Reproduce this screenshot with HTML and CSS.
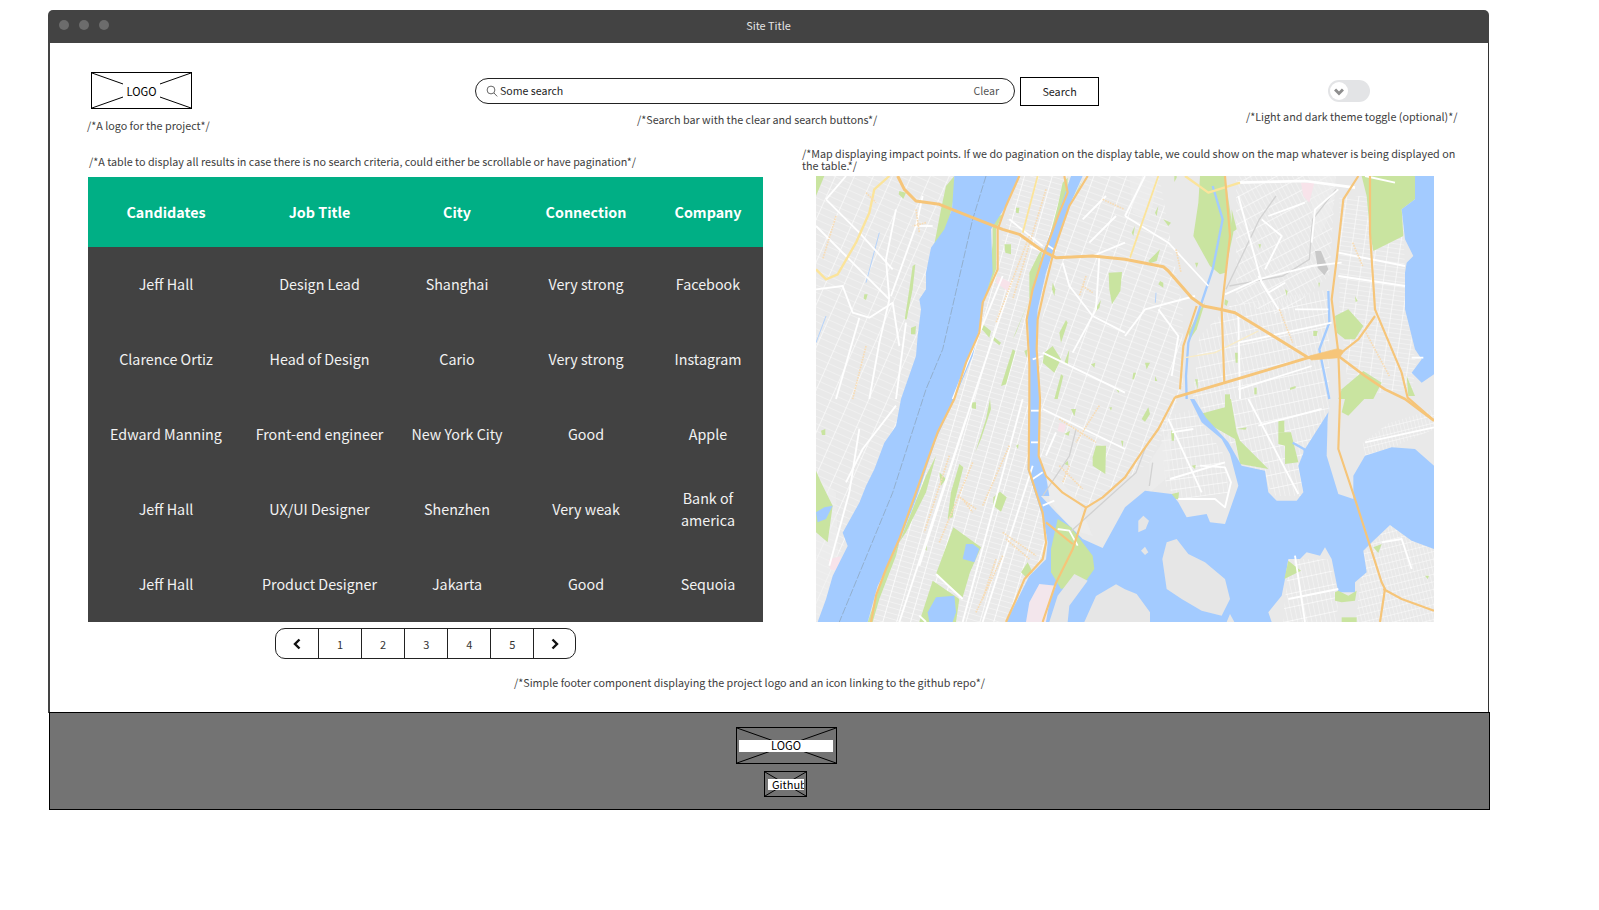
FILE: index.html
```html
<!DOCTYPE html>
<html lang="en">
<head>
<meta charset="utf-8">
<title>Site Title</title>
<link rel="stylesheet" href="styles.css">
</head>
<body>
<div class="window">
  <div class="titlebar">
    <div class="dots"><span class="dot"></span><span class="dot"></span><span class="dot"></span></div>
    <div class="site-title">Site Title</div>
  </div>
  <div class="page">
    <div class="head">
      <div class="head-logo">
        <div class="logo logo-top">
          <svg class="cross" viewBox="0 0 100 36" preserveAspectRatio="none"><path d="M0 0L100 36M100 0L0 36"/></svg>
          <span class="logo-label">LOGO</span>
        </div>
        <p class="note note-logo">/*A logo for the project*/</p>
      </div>
      <div class="head-search">
        <div class="search-row">
          <div class="search-pill">
            <svg class="search-icon" viewBox="0 0 12 12"><circle cx="5" cy="5" r="3.9"/><path d="M8 8L11.2 11.4"/></svg>
            <span class="search-text">Some search</span>
            <span class="search-clear">Clear</span>
          </div>
          <div class="search-btn">Search</div>
        </div>
        <p class="note note-search">/*Search bar with the clear and search buttons*/</p>
      </div>
      <div class="head-theme">
        <div class="toggle"><span class="knob"><svg viewBox="0 0 10 8"><path d="M1.5 2.2L5 5.7L8.5 2.2"/></svg></span></div>
        <p class="note note-theme">/*Light and dark theme toggle (optional)*/</p>
      </div>
    </div>
    <div class="main">
      <div class="col-table">
        <p class="note note-table">/*A table to display all results in case there is no search criteria, could either be scrollable or have pagination*/</p>
        <table class="results">
          <colgroup><col class="c1"><col class="c2"><col class="c3"><col class="c4"><col class="c5"></colgroup>
          <thead><tr><th>Candidates</th><th>Job Title</th><th>City</th><th>Connection</th><th>Company</th></tr></thead>
          <tbody>
            <tr><td>Jeff Hall</td><td>Design Lead</td><td>Shanghai</td><td>Very strong</td><td>Facebook</td></tr>
            <tr><td>Clarence Ortiz</td><td>Head of Design</td><td>Cario</td><td>Very strong</td><td>Instagram</td></tr>
            <tr><td>Edward Manning</td><td>Front-end engineer</td><td>New York City</td><td>Good</td><td>Apple</td></tr>
            <tr><td>Jeff Hall</td><td>UX/UI Designer</td><td>Shenzhen</td><td>Very weak</td><td>Bank of america</td></tr>
            <tr><td>Jeff Hall</td><td>Product Designer</td><td>Jakarta</td><td>Good</td><td>Sequoia</td></tr>
          </tbody>
        </table>
        <div class="pager">
          <span class="pg pg-prev"><svg viewBox="0 0 10 12"><path d="M7.5 1.5L3 6L7.5 10.5"/></svg></span>
          <span class="pg">1</span><span class="pg">2</span><span class="pg">3</span><span class="pg">4</span><span class="pg">5</span>
          <span class="pg pg-next"><svg viewBox="0 0 10 12"><path d="M2.5 1.5L7 6L2.5 10.5"/></svg></span>
        </div>
      </div>
      <div class="col-map">
        <p class="note note-map">/*Map displaying impact points. If we do pagination on the display table, we could show on the map whatever is being displayed on the table.*/</p>
        <svg class="map" viewBox="0 0 1854 1338">
          <defs>
            <filter id="soft" x="0" y="0" width="100%" height="100%"><feGaussianBlur stdDeviation="1.3"/></filter>
            <clipPath id="mapClip"><rect width="1854" height="1338"/></clipPath>
            <pattern id="pManh" width="16" height="40" patternUnits="userSpaceOnUse" patternTransform="rotate(-74)"><path d="M0 0H16" stroke="#fff" stroke-width="4.5"/><path d="M0 0V40" stroke="#fff" stroke-width="2.2"/></pattern>
            <pattern id="pNj" width="20" height="52" patternUnits="userSpaceOnUse" patternTransform="rotate(-66)"><path d="M0 0H20" stroke="#fff" stroke-width="3.4"/><path d="M0 0V52" stroke="#fff" stroke-width="1.8"/></pattern>
            <pattern id="pWest" width="18" height="46" patternUnits="userSpaceOnUse" patternTransform="rotate(-70)"><path d="M0 0H18" stroke="#fff" stroke-width="4"/><path d="M0 0V46" stroke="#fff" stroke-width="2"/></pattern>
            <pattern id="pMid" width="14" height="40" patternUnits="userSpaceOnUse" patternTransform="rotate(-12)"><path d="M0 0H14" stroke="#fff" stroke-width="3.6"/><path d="M0 0V40" stroke="#fff" stroke-width="2"/></pattern>
            <pattern id="pNorth" width="14" height="36" patternUnits="userSpaceOnUse" patternTransform="rotate(-28)"><path d="M0 0H14" stroke="#fff" stroke-width="3.4"/><path d="M0 0V36" stroke="#fff" stroke-width="1.9"/></pattern>
            <pattern id="pEast" width="36" height="14" patternUnits="userSpaceOnUse" patternTransform="rotate(8)"><path d="M0 0H36" stroke="#fff" stroke-width="2"/><path d="M0 0V14" stroke="#fff" stroke-width="3.4"/></pattern>
            <pattern id="pSouth" width="14" height="30" patternUnits="userSpaceOnUse" patternTransform="rotate(-8)"><path d="M0 0H14" stroke="#fff" stroke-width="3.6"/><path d="M0 0V30" stroke="#fff" stroke-width="1.8"/></pattern>
            <pattern id="pThrog" width="11" height="22" patternUnits="userSpaceOnUse" patternTransform="rotate(-14)"><path d="M0 0H11" stroke="#fff" stroke-width="2.6"/><path d="M0 0V22" stroke="#fff" stroke-width="1.8"/></pattern>
          </defs>
          <g filter="url(#soft)" clip-path="url(#mapClip)">
          <rect class="land" width="1854" height="1338"/>

          <g class="streets">
            <path fill="url(#pNj)" d="M0 0H415L330 340 300 540 240 750 130 980 50 1200 5 1338H0Z"/>
            <path fill="url(#pManh)" d="M610 0H765L640 520 640 880 700 1100 570 1338H155L415 669 530 290Z"/>
            <path fill="url(#pWest)" d="M765 0H1030L1100 400 1100 640 1000 860 810 995 670 850 660 520Z"/>
            <path fill="url(#pNorth)" d="M1260 0H1560L1540 300 1400 420 1260 380Z"/>
            <path fill="url(#pMid)" d="M1240 390L1540 340 1540 700 1520 860 1460 960 1380 960 1250 810 1130 669 1150 480Z"/>
            <path fill="url(#pEast)" d="M1570 60H1760L1770 400 1800 560 1790 640 1600 660 1570 400Z"/>
            <path fill="url(#pThrog)" d="M1640 800L1720 740 1854 700V760L1760 800 1650 860Z"/>
            <path fill="url(#pSouth)" d="M1030 730L1130 700 1220 830 1240 950 1090 970 1050 930Z"/>
            <path fill="url(#pMid)" d="M1400 1338L1420 1150 1540 1150 1570 1260 1560 1338Z"/>
            <path fill="url(#pThrog)" d="M1620 1338L1640 1130 1722 1047 1854 1120V1338Z"/>
          </g>
          <path class="pale" d="M940 0L1030 0 1000 130 950 110Z"/>
          <path class="pale" d="M0 900L60 950 70 1250 0 1338Z"/>
          <path class="pale" d="M690 880L780 960 830 1080 760 1060 700 970Z"/>
          <path class="pale" d="M1000 860L1070 750 1060 900 1000 950Z"/>
          <path class="pale" d="M1480 0H1560L1550 100 1500 200 1490 110Z"/>

          <path class="pink" d="M545 300L585 320 575 345 540 320Z"/>
          <path class="pink" d="M1455 20H1495L1480 80 1462 60Z"/>
          <path class="pink" d="M40 1150L75 1140 65 1185 42 1180Z"/>
          <path class="pink" d="M730 740L750 745 745 770 725 765Z"/>

          <g class="greens">
            <path d="M0 0H25L0 60Z"/>
            <path d="M355 205L375 100 390 30 415 0V60L395 150 370 215Z"/>
            <path d="M250 45L270 50 262 68 248 55Z"/>
            <path d="M290 270L298 265 290 340 272 430 266 430 280 340Z"/>
            <path d="M145 355L155 355 150 372 143 368Z"/>
            <path d="M285 455L300 450 298 475 285 475Z"/>
            <path d="M505 370L520 300 530 200 530 130 560 115 540 160 540 280Z"/>
            <path d="M565 205L585 205 585 235 568 230Z"/>
            <path d="M600 95L610 95 608 112 600 110Z"/>
            <path d="M500 445L525 465 520 485 498 460Z"/>
            <path d="M530 480L555 500 550 508 528 490Z"/>
            <path d="M405 625L430 560 450 555 425 630 415 645Z"/>
            <path d="M555 630L590 520 598 525 570 625Z"/>
            <path d="M590 490L640 370 640 290 665 240 680 215 665 310 640 370 600 470Z"/>
            <path d="M740 20L755 5V60L715 170 695 205 725 90Z"/>
            <path d="M765 80L800 10 775 70Z"/>
            <path d="M878 290L918 288 913 345 888 385 880 340Z"/>
            <path d="M730 470L750 432 755 440 735 500Z"/>
            <path d="M685 530L710 510 735 550 715 590 680 560Z"/>
            <path d="M745 560L760 520 755 570Z"/>
            <path d="M715 669L735 595 742 600 725 669Z"/>
            <path d="M710 320L718 340 715 360 708 340Z"/>
            <path d="M840 395L855 372 850 395 835 410Z"/>
            <path d="M825 565L838 560 835 575Z"/>
            <path d="M625 525L635 520 632 545Z"/>
            <path d="M900 640L910 640 908 650Z"/>
          </g>
          <g class="greens" transform="translate(927 0)">
            <path d="M225 0H300L325 170 300 290 285 295 255 270 205 180 220 80Z"/>
            <path d="M320 100L335 160 320 170Z"/>
            <path d="M710 0H870V70L830 100 835 180 745 225 735 170 725 60Z"/>
            <path d="M70 255L105 220 95 255 75 262Z"/>
            <path d="M115 130L138 140 130 150Z"/>
            <path d="M90 110L100 90 95 120Z"/>
            <path d="M20 170L30 150 25 180Z"/>
            <path d="M148 0H155V5L148 18Z"/>
            <path d="M210 260L220 260 215 275Z"/>
            <path d="M105 315L115 320V335L100 325Z"/>
            <path d="M300 370L310 375 305 390 298 385Z"/>
            <path d="M630 420L670 400 715 450 690 490 660 490 635 470Z"/>
            <path d="M650 640L715 585 770 620 745 669H640Z"/>
            <path d="M330 530H338V560H332Z"/>
            <path d="M25 590H33L27 610H22Z"/>
            <path d="M495 635L512 630V637L495 642Z"/>
            <path d="M388 635H395V655H388Z"/>
            <path d="M300 655H315V669H300Z"/>
            <path d="M210 610H218V640Z"/>
            <path d="M845 600L870 660H850Z"/>
            <path d="M60 560H75L65 580Z"/>
            <path d="M90 600L97 615H90Z"/>
            <path d="M225 400L240 380 215 460 195 490 190 470Z"/>
            <path d="M565 465H578L575 480H565Z"/>
            <path d="M690 360L698 375 692 378Z"/>
            <path d="M400 205H408L405 218Z"/>
            <path d="M480 340L488 345 485 360Z"/>
            <path d="M580 320H585L582 335Z"/>
          </g>
          <g class="greens" transform="translate(0 669)">
            <path d="M0 215L15 250 50 320 35 430 0 400Z"/>
            <path d="M15 95L28 90V108H18Z"/>
            <path d="M478 160L510 60 522 0 525 30 495 120Z"/>
            <path d="M465 10H480V30L468 28Z"/>
            <path d="M395 360L405 280 430 195 442 205 415 310 410 355Z"/>
            <path d="M532 295L552 278 572 295 555 338 532 320Z"/>
            <path d="M360 525L412 385 495 445 462 520 440 595 375 540Z"/>
            <path d="M310 669L350 545 430 600 420 669Z"/>
            <path d="M325 450L332 432V455Z"/>
            <path d="M250 430L330 230 360 170 330 280 270 400Z"/>
            <path d="M155 669L210 510 250 430 240 470 190 600 170 669Z"/>
            <path d="M615 520L635 490 650 520 630 535Z"/>
            <path d="M830 175L840 140H870L868 225 830 200Z"/>
            <path d="M745 195L755 185 758 200Z"/>
            <path d="M765 30H780L775 52Z"/>
            <path d="M745 105L762 95 758 110Z"/>
            <path d="M880 25H888L885 35Z"/>
            <path d="M915 125H922L920 145Z"/>
            <path d="M600 140L608 135 606 150Z"/>
            <path d="M370 220L390 240 375 260Z"/>
          </g>
          <g class="greens" transform="translate(927 669)">
            <path d="M225 45L300 25V0H318L335 100 345 125 430 210 345 195 330 120 250 75Z"/>
            <path d="M50 60L70 25 75 45 60 68Z"/>
            <path d="M138 95H147V125H140Z"/>
            <path d="M140 285L162 280 160 300H145Z"/>
            <path d="M200 200L212 198 210 210Z"/>
            <path d="M335 90L365 85 362 92Z"/>
            <path d="M460 65H478V100H460Z"/>
            <path d="M460 100H498L520 190 480 195V140L460 135Z"/>
            <path d="M535 175L555 180 545 198Z"/>
            <path d="M650 40L660 0H718L670 50Z"/>
            <path d="M745 445L770 435 760 462Z"/>
            <path d="M900 530H912L908 540Z"/>
          </g>

          <g class="water">
            <path d="M415 0L408 100 385 160 345 215 330 290 330 340 310 370 315 400 305 480 300 540 255 669 240 750 205 800 175 880 150 930 130 980 80 1070 95 1110 50 1200 30 1270 5 1338H155L185 1230 245 1110 300 970 360 790 415 669 470 540 495 440 505 370 530 290 525 160 570 90 610 0Z"/>
            <path d="M765 0H800L760 90 720 200 690 290 665 400 660 510 672 669 668 840 690 900 700 960H660L635 880 640 669 640 520 635 420 650 330 680 230 720 130Z"/>
            <path d="M640 880L670 955 720 1009 800 1089 860 1116 927 994 987 944 1067 954 1087 979 1112 1024 1172 1014 1182 1039 1227 1044 1267 929 1242 834 1217 789 1157 739 1122 669H1135L1170 725 1237 799 1277 869 1347 884 1357 949 1382 974 1442 974 1462 949 1447 869 1467 819 1537 709 1542 669 1535 729 1532 839 1567 954 1612 969V899L1647 839 1727 814 1797 819 1854 869V1119L1787 1094 1722 1047 1662 1104 1642 1124 1652 1189 1617 1219V1249H1567L1547 1149 1527 1114 1512 1139 1472 1129 1452 1149H1417L1407 1209 1397 1259 1357 1309 1367 1338H570L605 1270 640 1200 690 1150 695 1100 685 1040 660 960 635 880Z"/>
            <path d="M1797 0H1854V595L1817 620 1787 590 1817 550 1797 520 1767 400V290L1772 260 1792 240 1767 190 1757 100 1797 70Z"/>
            <path d="M0 1009L25 994 50 989 30 1029 5 1039Z"/>
          </g>
          <g class="thinwater">
            <path d="M1112 669L1110 600 1117 500 1150 400 1190 280 1220 130 1190 30"/>
            <path d="M1537 345L1540 440 1510 520 1540 669"/>
            <path d="M1430 800L1465 820 1470 850"/>
          </g>
          <g class="thinstream">
            <path d="M190 170L150 320"/>
            <path d="M30 420L0 500"/>
            <path d="M1020 350L1018 380"/>
          </g>
          <g class="greens" transform="translate(0 669)">
            <path d="M705 450L725 360 765 385 830 470 835 510 810 545 735 570 705 520Z"/>
          </g>
          <g class="islands">
            <path d="M630 1338L640 1279 670 1224 720 1229 700 1279 690 1338Z" class="pinkland"/>
            <path d="M725 1259L775 1194 815 1214 760 1289 755 1338H700Z"/>
            <path d="M1039 1149L1052 1099 1082 1089 1117 1134 1167 1159 1227 1209 1242 1269 1217 1319 1157 1304 1097 1269 1052 1239Z"/>
            <path d="M967 1069V1034L982 1019 999 1034 989 1059Z"/>
            <path d="M975 1124L987 1112 997 1129 987 1137Z"/>
            <path d="M805 1338L840 1260 900 1225 927 1240 962 1254 1002 1309V1338Z"/>
            <path d="M1232 1338L1242 1314 1255 1338Z"/>
          </g>
          <g class="greens" transform="translate(927 669)">
            <path d="M478 540L490 485 528 515Z"/>
            <path d="M630 580L640 575 670 590 695 575 690 605 650 610 630 605Z"/>
            <path d="M650 655H695V669H650Z"/>
          </g>
          <g class="water">
            <path d="M450 1104H470L490 1119 475 1159 440 1149Z"/>
            <path d="M335 1309L360 1264 415 1259 420 1309 410 1338H340Z"/>
            <path d="M5 1015L30 1000 25 1030Z"/>
          </g>
          <path class="oval" d="M1497 225L1515 225 1537 280 1525 298 1505 275Z"/>
          <path class="railgray" d="M1230 340L1330 130 1380 60M1240 330L1400 300 1480 250 1490 130 1560 40"/>
          <path class="railgray" d="M680 960L760 840 780 760M760 1070L960 890 990 810M1010 860L1000 930"/>
          <path class="rail" d="M510 0L470 130 380 520 330 640 230 950 70 1338"/>

          <g class="roads">
            <path d="M0 150L100 250 220 370"/><path d="M30 70L130 170 230 280"/>
            <path d="M0 340L80 330 110 410 160 425 230 380 250 510"/>
            <path d="M90 0L30 70"/><path d="M240 100L210 250 220 370"/>
            <path d="M300 150H350"/><path d="M270 440L240 669"/><path d="M130 425L60 669"/>
            <path d="M220 370L190 500 160 669"/><path d="M320 60L300 150 225 360"/>
            <path d="M580 130L680 210"/><path d="M410 669L560 300"/><path d="M470 669L590 310"/>
            <path d="M640 210L710 240"/>
            <path d="M740 260L760 330 830 420 927 470"/><path d="M850 240L840 400 770 530"/>
            <path d="M680 530L927 650"/><path d="M927 200L830 240"/><path d="M650 550L680 540"/>
            <path d="M800 130L870 60"/><path d="M900 120L820 200"/><path d="M690 205L720 225"/>
          </g>
          <g class="roads" transform="translate(927 0)">
            <path d="M0 120L130 200 250 330"/><path d="M60 0L0 120"/><path d="M340 60L410 320 460 400"/>
            <path class="major" d="M340 20L540 15 690 35"/><path d="M300 355L400 310 560 270 650 260"/>
            <path d="M400 300L430 350 480 320"/><path d="M430 120L540 80"/><path d="M560 200L570 100 640 40"/>
            <path d="M0 480L60 400 210 360"/><path d="M100 400L160 480 140 600"/><path d="M340 420L345 669"/>
            <path d="M510 400L610 400"/><path d="M340 500L620 440"/><path d="M340 640L560 570"/>
            <path d="M640 230L840 270"/><path d="M640 300L840 330"/><path d="M720 0L810 20"/>
            <path d="M860 545H895"/><path d="M410 130L470 180 420 280"/>
          </g>
          <g class="roads" transform="translate(0 669)">
            <path d="M130 90L100 280 40 500"/><path d="M240 20L140 150 90 250"/>
            <path d="M250 669L450 60"/><path d="M310 500L470 0"/><path d="M440 669L620 0"/><path d="M500 669L650 200"/>
            <path d="M360 525L440 600"/><path d="M310 650L330 669"/>
            <path d="M680 30L927 150"/><path d="M720 100L690 170"/><path d="M645 35H670"/><path d="M645 130H670"/>
            <path d="M650 240L680 220"/><path d="M680 320L715 305"/><path d="M725 390L760 395 785 440"/>
          </g>
          <g class="roads" transform="translate(927 669)">
            <path d="M225 200L300 205 318 250 300 325 270 300 160 300"/><path d="M130 60L230 280"/>
            <path d="M135 240L300 190"/><path d="M370 0L520 285"/><path d="M400 80L590 30"/><path d="M140 100L205 90"/>
            <path d="M490 600L640 570"/><path d="M770 430L830 420 860 510"/><path d="M720 130L927 85"/>
            <path d="M510 470L540 669"/>
          </g>
          <g class="yellow">
            <path class="major" d="M0 280L30 310 65 295 120 200 160 110 175 40 220 0"/>
            <path d="M665 0L620 170"/>
            <path d="M1027 0L942 245"/>
            <path class="major" d="M1107 0L1177 50 1272 20"/>
            <path class="thin" d="M1107 545L1197 530 1327 465"/>
          </g>
          <g class="faint">
            <path d="M60 120L20 250"/><path d="M150 510L110 669"/><path d="M300 100L310 170"/><path d="M330 140L290 150"/>
            <path d="M690 40L590 370"/><path d="M810 300L790 360"/><path d="M800 330L830 350"/><path d="M640 180L540 440"/>
            <path d="M860 70L925 100"/><path d="M150 50L180 80"/>
            <path d="M1080 220L1095 290"/><path d="M1390 400L1430 500"/><path d="M1610 200L1640 270"/>
            <path d="M1650 470L1720 600"/>
          </g>
          <g class="faint" transform="translate(0 669)">
            <path d="M400 170L325 400"/><path d="M470 190L370 430"/><path d="M440 300L470 340"/><path d="M425 290L480 330"/>
            <path d="M580 140L500 320"/><path d="M560 400L660 470"/><path d="M570 420L640 480"/>
            <path d="M560 470L480 640"/><path d="M540 480L500 600"/><path d="M730 60L840 130"/>
            <path d="M730 200L800 270"/><path d="M760 200L740 250"/><path d="M850 20L780 130"/>
          </g>
          <g class="highways">
            <path class="wide" d="M245 0L265 40 300 75 370 85 470 125 560 160 610 175 680 225 720 245 830 240 927 250 1042 272 1057 285 1127 365 1162 390 1212 400 1257 410 1347 465 1477 545"/>
            <path d="M610 0L570 90 545 160 545 280 500 380 490 470 450 560 415 669 365 769 300 949 250 1089 210 1179 180 1259 165 1338"/>
            <path d="M815 0L760 90 715 220 685 340 665 430 662 520 672 669 668 840 690 900 740 950 810 995 770 1120 720 1220 680 1338"/>
            <path d="M745 0L755 50 730 110 680 245 650 340 632 430 640 560 640 669 638 880 680 1010 690 1100 680 1150 625 1210 600 1270 570 1338"/>
            <path d="M810 995L860 964 927 904 977 829 1027 759 1077 664"/>
            <path class="wide" d="M1077 664L1227 620 1477 545 1567 530"/>
            <path d="M1092 640L1102 510 1142 390"/>
            <path d="M1227 0L1242 180 1217 400 1225 620"/>
            <path d="M1627 0L1582 70 1562 250 1547 370 1567 530 1572 669 1567 819 1617 969 1697 1219 1707 1239 1692 1338"/>
            <path d="M1662 0V170L1677 400 1757 590 1775 665 1854 734"/>
            <path class="wide2" d="M1567 540L1647 600 1707 640 1767 669 1854 734"/>
            <path d="M1582 525L1627 490 1677 420"/>
            <path d="M690 1039L770 1104"/>
            <path d="M1702 1239L1757 1269 1854 1304"/>
            <path class="blob" d="M1480 540L1565 518 1585 525 1570 545 1485 552Z"/>
          </g>
          </g>
        </svg>
      </div>
    </div>
    <p class="note note-footer">/*Simple footer component displaying the project logo and an icon linking to the github repo*/</p>
  </div>
  <footer class="footer">
    <div class="logo logo-foot">
      <svg class="cross" viewBox="0 0 100 36" preserveAspectRatio="none"><path d="M0 0L100 36M100 0L0 36"/></svg>
      <span class="strip">LOGO</span>
    </div>
    <div class="logo logo-git">
      <svg class="cross" viewBox="0 0 100 36" preserveAspectRatio="none"><path d="M0 0L100 36M100 0L0 36"/></svg>
      <span class="strip strip-git">Github</span>
    </div>
  </footer>
</div>
</body>
</html>
```
FILE: styles.css
```css
* { box-sizing: border-box; }
html, body { margin: 0; padding: 0; background: #fff; }
body {
  font-family: "Noto Sans CJK SC", "Noto Sans", sans-serif;
  color: #3d3d3d;
  height: 910px;
  overflow: hidden;
}
p { margin: 0; }

.window { width: 1441px; margin: 10px 0 0 48px; }

.titlebar {
  height: 33px;
  background: #434343;
  border-radius: 5px 5px 0 0;
  display: grid;
  grid-template-columns: 1fr auto 1fr;
  align-items: center;
  padding: 0 11px;
}
.dots { display: flex; gap: 10px; margin-top: -3px; }
.dot { width: 10px; height: 10px; border-radius: 50%; background: #6c6c6c; }
.site-title { font-size: 10.9px; color: #e6e6e6; line-height: 16px; margin-top: -3px; }

.page {
  height: 670px;
  border-left: 2px solid #444;
  border-right: 1px solid #333;
  padding-left: 37px;
}

.note { font-size: 10.75px; line-height: 14px; color: #3d3d3d; white-space: nowrap; }

.head { display: grid; grid-template-columns: 388px 624px 1fr; height: 104px; }
.head-logo { padding-top: 29px; }
.logo { position: relative; display: flex; align-items: center; justify-content: center; border: 1.5px solid #000; }
.cross { position: absolute; inset: 0; width: 100%; height: 100%; }
.cross path { stroke: #000; stroke-width: 1; fill: none; vector-effect: non-scaling-stroke; }
.logo-top { width: 101px; height: 37px; margin-left: 4px; font-size: 11.2px; color: #000; }
.logo-label { position: relative; background: #fff; padding: 1px 3px 0; line-height: 15px; }
.note-logo { margin-top: 10px; }

.head-search { padding-top: 34px; }
.search-row { display: flex; gap: 5px; align-items: flex-start; height: 29px; }
.search-pill {
  width: 541px; height: 26px; margin-top: 1px;
  border: 1.5px solid #222; border-radius: 13px;
  display: flex; align-items: center;
  padding: 0 15px 2px 10px;
  font-size: 10.6px; color: #222;
}
.search-icon { width: 12px; height: 12px; margin: 2px 2px 0 0; }
.search-icon circle, .search-icon path { fill: none; stroke: #555; stroke-width: .9; }
.search-text { flex: 1; }
.search-clear { color: #555; }
.search-btn {
  width: 79px; height: 29px;
  border: 1.5px solid #000;
  font-size: 10.75px; color: #222;
  display: flex; align-items: center; justify-content: center;
}
.note-search { margin-top: 7px; padding-left: 162px; }

.head-theme { padding-top: 37px; padding-left: 147px; }
.toggle {
  width: 42px; height: 22px; margin-left: 82px;
  background: #e3e4e6; border-radius: 11px;
  display: flex; align-items: center; padding-left: 2px;
}
.knob {
  width: 18px; height: 18px; border-radius: 50%; background: #fff;
  display: flex; align-items: center; justify-content: center;
}
.knob svg { width: 12px; height: 9px; }
.knob path { fill: none; stroke: #8e8e8e; stroke-width: 2.6; }
.note-theme { margin-top: 8px; }

.main { display: grid; grid-template-columns: 675px 660px; column-gap: 39px; margin-left: 1px; }
.note-table { padding-top: 8px; padding-left: 1px; height: 30px; }

.results {
  width: 675px; table-layout: fixed; border-collapse: collapse;
  background: #424242; color: #f2f2f2;
  font-size: 14.3px; line-height: 22px; text-align: center;
}
.c1 { width: 156px; }
.c2 { width: 151px; }
.c3 { width: 124px; }
.c4 { width: 134px; }
.c5 { width: 110px; }
.results th {
  height: 70px; background: #00af85; color: #fff;
  font-weight: 700; padding: 0;
}
.results td { height: 75px; padding: 0 8px 2px; font-weight: 400; }
.results td:last-child { padding: 0 14px 2px; }

.pager {
  display: flex; width: 301px; height: 31px; margin: 6px 0 0 187px;
  border: 1.5px solid #222; border-radius: 10px;
  font-size: 11px; color: #333;
}
.pg {
  flex: 1; display: flex; align-items: center; justify-content: center;
  border-left: 1.5px solid #222;
}
.pg:first-child { border-left: 0; }
.pg-prev { flex: 0 0 42px; }
.pg-next { flex: 0 0 41.5px; }
.pg-prev svg, .pg-next svg { width: 10px; height: 12px; }
.pg-prev path, .pg-next path { fill: none; stroke: #111; stroke-width: 2.4; }

.note-map { white-space: normal; line-height: 12px; height: 28px; padding-top: 1px; width: 660px; }
.map { display: block; width: 618px; height: 446px; margin: 1px 0 0 14px; }
.land { fill: #e9e9e9; }
.pale { fill: #efefef; opacity: .55; }
.greens path { fill: #c9e4a0; }
.pink { fill: #f8e3ea; }
.islands .pinkland { fill: #f3e6ec; }
.water path { fill: #a3cbff; }
.islands path { fill: #e6e6e6; }
.thinwater path { fill: none; stroke: #a3cbff; stroke-width: 7; }
.thinstream path { fill: none; stroke: #b5d3fb; stroke-width: 3; }
.oval { fill: #c9c9c9; }
.railgray { fill: none; stroke: #d2d2d2; stroke-width: 4; }
.rail { fill: none; stroke: #8fa9c4; stroke-width: 2.5; stroke-dasharray: 24 5; }
.roads path { fill: none; stroke: #fff; stroke-width: 5.5; stroke-linejoin: round; }
.roads .major { stroke-width: 8; }
.yellow path { fill: none; stroke: #fbe49b; stroke-width: 5.5; stroke-linejoin: round; }
.yellow .major { stroke-width: 7; }
.yellow .thin { stroke: #f9ecc6; stroke-width: 4; }
.faint path { fill: none; stroke: #f7dcb6; stroke-width: 5; stroke-dasharray: 5 3; }
.highways path { fill: none; stroke: #f6c579; stroke-width: 6.5; stroke-linejoin: round; }
.highways .wide { stroke-width: 9; }
.highways .wide2 { stroke-width: 8; }
.highways .blob { fill: #f6c579; stroke-width: 2; }

.note-footer { margin-top: 17px; padding-left: 427px; }

.footer {
  width: 1441px; height: 98px; margin-left: 1px; margin-top: -1px;
  background: #737373;
  border: 1.5px solid #000;
  display: flex; flex-direction: column; align-items: center;
  padding: 14px 0 0 33px; gap: 7px;
}
.logo-foot { width: 101px; height: 37px; font-size: 11.2px; color: #000; }
.logo-git { width: 43px; height: 26px; font-size: 11px; color: #000; overflow: hidden; margin-right: 1px; }
.strip {
  position: relative; background: #fff; width: 94px; height: 12px;
  display: flex; align-items: center; justify-content: center;
  line-height: 11px; padding-bottom: 1px;
}
.strip-git { width: 36px; height: 11px; justify-content: flex-start; padding: 0 0 0 4px; overflow: hidden; margin-left: 1px; }
```
